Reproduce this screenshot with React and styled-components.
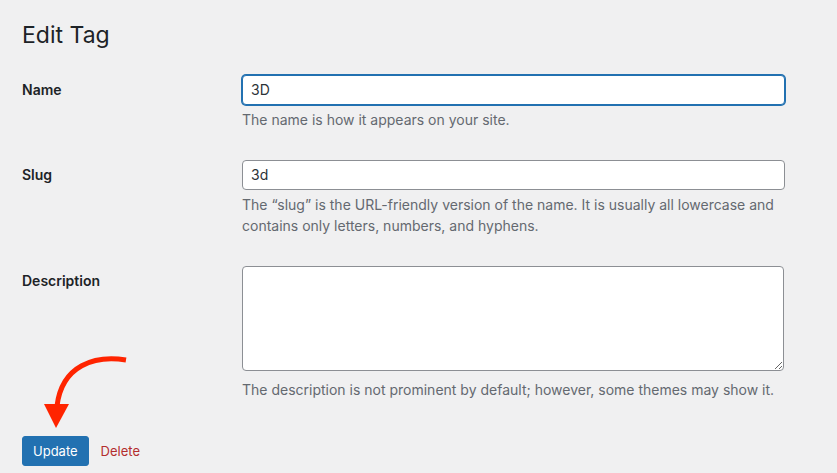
import styled, { createGlobalStyle } from "styled-components";

const GlobalStyle = createGlobalStyle`
  html, body {
    margin: 0;
    padding: 0;
    background: #f0f0f1;
  }
  body {
    font-family: Inter, "Noto Sans", "Liberation Sans", sans-serif;
    color: #1d2327;
    font-size: 13px;
    line-height: 1.4em;
  }
`;

const Wrap = styled.div`
  position: relative;
  padding: 10px 20px 0 22px;
  min-height: 473px;
  box-sizing: border-box;
`;

const Title = styled.h1`
  margin: 0;
  padding: 11px 0 2px;
  font-size: 23px;
  font-weight: 400;
  line-height: 1.3;
  color: #1d2327;
`;

const FormTable = styled.div`
  margin-top: 7px;
  display: flex;
  flex-direction: column;
`;

const Row = styled.div`
  display: grid;
  grid-template-columns: 220px 1fr;
`;

const Label = styled.label`
  padding: 21px 10px 19px 0;
  font-size: 14px;
  font-weight: 600;
  line-height: 1.3;
  color: #1d2327;
`;

const Field = styled.div`
  padding: 15px 10px 15px 0;
`;

const TextInput = styled.input`
  display: block;
  box-sizing: border-box;
  width: 543px;
  height: 30px;
  padding: 0 8px;
  margin: 0;
  font-family: inherit;
  font-size: 14px;
  color: #2c3338;
  background: #fff;
  border: 1px solid ${(p) => (p.$focused ? "#2271b1" : "#8c8f94")};
  border-radius: 4px;
  box-shadow: ${(p) => (p.$focused ? "0 0 0 1px #2271b1" : "none")};
  outline: none;
`;

const TextArea = styled.textarea`
  display: block;
  box-sizing: border-box;
  width: 542px;
  height: 105px;
  padding: 2px 6px;
  margin: 0 0 8px;
  font-family: inherit;
  font-size: 14px;
  color: #2c3338;
  background: #fff;
  border: 1px solid #8c8f94;
  border-radius: 4px;
  outline: none;
`;

const Help = styled.p`
  margin: 4px 0 0;
  font-size: 14px;
  line-height: 21px;
  color: #646970;
  max-width: 543px;
`;

const Submit = styled.div`
  margin-top: 21px;
  display: flex;
  align-items: center;
  gap: 12px;
`;

const PrimaryButton = styled.button`
  height: 30px;
  padding: 0 10px;
  font-family: inherit;
  font-size: 13px;
  line-height: 28px;
  color: #fff;
  background: #2271b1;
  border: 1px solid #2271b1;
  border-radius: 3px;
  cursor: pointer;
`;

const DeleteLink = styled.a`
  font-size: 13px;
  color: #b32d2e;
  text-decoration: none;
`;

const Arrow = styled.svg`
  position: absolute;
  left: 0;
  top: 0;
  pointer-events: none;
`;

export default function App() {
  return (
    <>
      <GlobalStyle />
      <Wrap>
        <Title>Edit Tag</Title>
        <FormTable>
          <Row>
            <Label htmlFor="tag-name">Name</Label>
            <Field>
              <TextInput id="tag-name" defaultValue="3D" $focused />
              <Help>The name is how it appears on your site.</Help>
            </Field>
          </Row>
          <Row>
            <Label htmlFor="slug">Slug</Label>
            <Field>
              <TextInput id="slug" defaultValue="3d" />
              <Help>
                The “slug” is the URL-friendly version of the name. It is usually all lowercase and
                contains only letters, numbers, and hyphens.
              </Help>
            </Field>
          </Row>
          <Row>
            <Label htmlFor="description">Description</Label>
            <Field>
              <TextArea id="description" />
              <Help>The description is not prominent by default; however, some themes may show it.</Help>
            </Field>
          </Row>
        </FormTable>
        <Submit>
          <PrimaryButton>Update</PrimaryButton>
          <DeleteLink href="#">Delete</DeleteLink>
        </Submit>
        <Arrow width="140" height="440" viewBox="0 0 140 440">
          <path d="M126 360 C 95 355, 62 365, 57 406" fill="none" stroke="#ff2400" strokeWidth="5" />
          <polygon points="44,404 69,404 56,428" fill="#ff2400" />
        </Arrow>
      </Wrap>
    </>
  );
}
